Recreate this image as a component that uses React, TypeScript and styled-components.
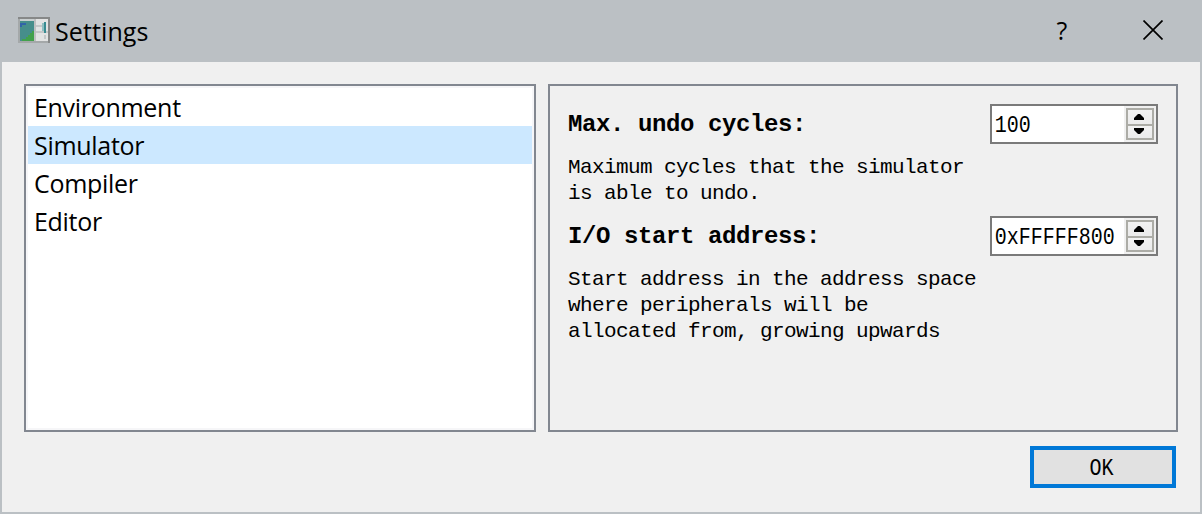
import React from "react";
import styled, { createGlobalStyle } from "styled-components";

const Global = createGlobalStyle`
  *, *::before, *::after { box-sizing: border-box; }
  html, body { margin: 0; padding: 0; }
  body { overflow: hidden; }
`;

const sans = `"Open Sans", "Noto Sans", sans-serif`;
const mono = `"Liberation Mono", monospace`;

const Dialog = styled.div`
  width: 1202px;
  height: 514px;
  display: flex;
  flex-direction: column;
  background: #f0f0f0;
  border: 2px solid #bbc0c4;
  border-top: 0;
  color: #000;
`;

const TitleBar = styled.header`
  height: 62px;
  flex: none;
  display: flex;
  align-items: center;
  padding: 0 37px 2px 16px;
  background: #bbc0c4;
`;

const Title = styled.h1`
  margin: 1px auto 0 5px;
  font: 400 25px/32px ${sans};
  letter-spacing: 0.1px;
`;

const HelpButton = styled.button`
  width: 20px;
  margin-right: 71px;
  padding: 0;
  border: 0;
  background: none;
  color: #000;
  font: 400 25px/32px ${sans};
`;

const CloseButton = styled.button`
  display: flex;
  padding: 0;
  border: 0;
  background: none;
`;

const Content = styled.main`
  display: flex;
  gap: 12px;
  height: 348px;
  margin: 22px 22px 0;
`;

const CategoryList = styled.ul`
  width: 512px;
  margin: 0;
  padding: 2px;
  list-style: none;
  background: #fff;
  border: 2px solid #828790;
  box-shadow: inset 0 0 0 2px #f6f6f8;
`;

const Category = styled.li<{ $selected?: boolean }>`
  height: 38px;
  padding-left: 6px;
  font: 400 25px/38px ${sans};
  letter-spacing: -0.3px;
  background: ${(p) => (p.$selected ? "#cce8ff" : "transparent")};
`;

const Panel = styled.section`
  flex: 1;
  padding: 18px;
  border: 2px solid #828790;
`;

const Setting = styled.div`
  display: flex;
  justify-content: space-between;
  height: 112px;
`;

const SettingText = styled.div`
  width: 414px;
`;

const Label = styled.h2`
  margin: 0;
  padding-top: 2px;
  height: 51px;
  white-space: nowrap;
  font: 700 24px/38px ${mono};
  letter-spacing: -0.4px;
`;

const Description = styled.p`
  margin: 0;
  white-space: pre;
  font: 400 21px/26px ${mono};
  letter-spacing: -0.6px;
`;

const SpinBox = styled.div`
  display: flex;
  justify-content: space-between;
  width: 168px;
  height: 40px;
  border: 2px solid #7a7a7a;
  background: #fff;
`;

const Value = styled.span`
  width: 132px;
  padding: 2px 0 0 3px;
  white-space: nowrap;
  font: 400 24px/36px ${mono};
  transform: scaleX(0.8333);
  transform-origin: 2px 50%;
`;

const Stepper = styled.div`
  width: 32px;
  flex: none;
  padding: 2px;
  background: #f0f0f0;
`;

const StepFrame = styled.div`
  display: grid;
  grid-template-rows: 14px 12px;
  gap: 2px;
  width: 28px;
  height: 32px;
  padding: 2px;
  background: #acaca6;
`;

const Step = styled.button`
  display: flex;
  align-items: flex-start;
  padding: 4px 0 0 6px;
  border: 0;
  background: linear-gradient(#f2f2f2, #ebebeb);

  & + & {
    padding-top: 2px;
  }
`;

const Footer = styled.footer`
  display: flex;
  justify-content: flex-end;
  padding: 14px 24px 0;
`;

const OkButton = styled.button`
  width: 146px;
  height: 42px;
  padding: 4px 4px 0 0;
  border: 4px solid #0078d7;
  background: #e1e1e1;
  color: #000;
  font: 400 24px/30px ${mono};
`;

const OkText = styled.span`
  display: inline-block;
  transform: scaleX(0.8333);
`;

function AppIcon() {
  return (
    <svg width="32" height="26" viewBox="0 0 32 26" shapeRendering="crispEdges">
      <path fill="#bfc0c1" d="M0 0h32v26H0z" />
      <path fill="#868888" d="M0 0h32v2H0zM30 2h2v24h-2z" />
      <path fill="#a4a8a9" d="M0 2h2v24H0zM2 24h28v2H2z" />
      <path fill="#c9cfd0" d="M2 2h14v2H2z" />
      <path fill="#468e8b" d="M2 4h14v20H2z" />
      <path fill="#3264a8" d="M2 6h6v2H4v2H2z" />
      <path fill="#42a14c" d="M14 14h2v10H4v-2h4v-2h2v-2h2v-2h2z" />
      <path fill="#e2e3e3" d="M18 2h12v22H18z" />
      <path fill="#c4c7c8" d="M18 8h6v2h-6zM18 14h12v2H18zM26 18h2v4h-2z" />
      <path fill="#8fbfc1" d="M24 6h2v8h-2z" />
      <path fill="#388b91" d="M26 5h2v11h-2z" />
    </svg>
  );
}

function Arrow({ down }: { down?: boolean }) {
  return (
    <svg width="10" height="6" viewBox="0 0 10 6">
      <path d={down ? "M0 0h10v2L6 6H4L0 2z" : "M4 0h2l4 4v2H0V4z"} />
    </svg>
  );
}

function Spin({ value }: { value: string }) {
  return (
    <SpinBox>
      <Value>{value}</Value>
      <Stepper>
        <StepFrame>
          <Step aria-label="Increase"><Arrow /></Step>
          <Step aria-label="Decrease"><Arrow down /></Step>
        </StepFrame>
      </Stepper>
    </SpinBox>
  );
}

const categories = ["Environment", "Simulator", "Compiler", "Editor"];

const settings = [
  {
    label: "Max. undo cycles:",
    value: "100",
    text: "Maximum cycles that the simulator\nis able to undo.",
  },
  {
    label: "I/O start address:",
    value: "0xFFFFF800",
    text: "Start address in the address space\nwhere peripherals will be\nallocated from, growing upwards",
  },
];

export default function App() {
  return (
    <>
      <Global />
      <Dialog>
        <TitleBar>
          <AppIcon />
          <Title>Settings</Title>
          <HelpButton>?</HelpButton>
          <CloseButton aria-label="Close">
            <svg width="20" height="20" viewBox="0 0 20 20">
              <path d="M0.5 0.5l19 19M19.5 0.5l-19 19" stroke="#000" strokeWidth="1.7" />
            </svg>
          </CloseButton>
        </TitleBar>
        <Content>
          <CategoryList>
            {categories.map((name) => (
              <Category key={name} $selected={name === "Simulator"}>{name}</Category>
            ))}
          </CategoryList>
          <Panel>
            {settings.map((s) => (
              <Setting key={s.label}>
                <SettingText>
                  <Label>{s.label}</Label>
                  <Description>{s.text}</Description>
                </SettingText>
                <Spin value={s.value} />
              </Setting>
            ))}
          </Panel>
        </Content>
        <Footer>
          <OkButton><OkText>OK</OkText></OkButton>
        </Footer>
      </Dialog>
    </>
  );
}
